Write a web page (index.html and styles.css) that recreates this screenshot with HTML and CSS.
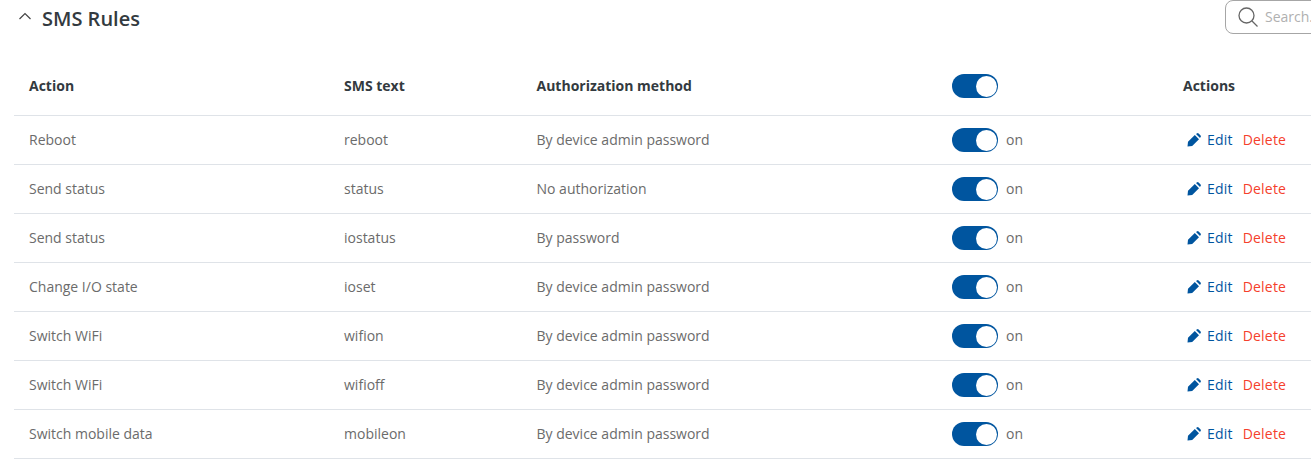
FILE: index.html
```html
<!DOCTYPE html>
<html lang="en">
<head>
    <meta charset="UTF-8">
    <meta name="viewport" content="width=device-width, initial-scale=1.0">
    <title>SMS Rules</title>
    <link rel="stylesheet" href="styles.css">
</head>
<body>
    <div class="top">
        <div class="title">
            <svg class="chevron" width="14" height="8" viewBox="0 0 14 8"><path d="M1.5 7 L7 1.5 L12.5 7" fill="none" stroke="#444" stroke-width="1.2"/></svg>
            <h2>SMS Rules</h2>
        </div>
        <div class="search">
            <svg width="22" height="22" viewBox="0 0 22 22"><circle cx="9.5" cy="9.5" r="7.5" fill="none" stroke="#666" stroke-width="1.3"/><path d="M15 15 L20.5 20.5" stroke="#666" stroke-width="1.3"/></svg>
            <span>Search...</span>
        </div>
    </div>
    <table>
        <thead>
            <tr>
                <th class="col-action">Action</th>
                <th class="col-text">SMS text</th>
                <th class="col-auth">Authorization method</th>
                <th class="col-toggle"><span class="switch"><i></i></span></th>
                <th class="col-actions">Actions</th>
            </tr>
        </thead>
        <tbody>
            <tr>
                <td>Reboot</td><td>reboot</td><td>By device admin password</td>
                <td><div class="state"><span class="switch"><i></i></span>on</div></td>
                <td><div class="links"><a class="edit" href="#"><svg width="14" height="14" viewBox="0 0 14 14"><path d="M.5 13.5 L1 8.8 L7.8 2 L12 6.2 L5.2 13 Z M9 1 L9.8 .4 Q10.8 -.2 11.6 .4 L13.6 2.4 Q14.2 3.2 13.6 4 L13 5 Z" fill="#00559f"/></svg>Edit</a><a class="delete" href="#">Delete</a></div></td>
            </tr>
            <tr>
                <td>Send status</td><td>status</td><td>No authorization</td>
                <td><div class="state"><span class="switch"><i></i></span>on</div></td>
                <td><div class="links"><a class="edit" href="#"><svg width="14" height="14" viewBox="0 0 14 14"><path d="M.5 13.5 L1 8.8 L7.8 2 L12 6.2 L5.2 13 Z M9 1 L9.8 .4 Q10.8 -.2 11.6 .4 L13.6 2.4 Q14.2 3.2 13.6 4 L13 5 Z" fill="#00559f"/></svg>Edit</a><a class="delete" href="#">Delete</a></div></td>
            </tr>
            <tr>
                <td>Send status</td><td>iostatus</td><td>By password</td>
                <td><div class="state"><span class="switch"><i></i></span>on</div></td>
                <td><div class="links"><a class="edit" href="#"><svg width="14" height="14" viewBox="0 0 14 14"><path d="M.5 13.5 L1 8.8 L7.8 2 L12 6.2 L5.2 13 Z M9 1 L9.8 .4 Q10.8 -.2 11.6 .4 L13.6 2.4 Q14.2 3.2 13.6 4 L13 5 Z" fill="#00559f"/></svg>Edit</a><a class="delete" href="#">Delete</a></div></td>
            </tr>
            <tr>
                <td>Change I/O state</td><td>ioset</td><td>By device admin password</td>
                <td><div class="state"><span class="switch"><i></i></span>on</div></td>
                <td><div class="links"><a class="edit" href="#"><svg width="14" height="14" viewBox="0 0 14 14"><path d="M.5 13.5 L1 8.8 L7.8 2 L12 6.2 L5.2 13 Z M9 1 L9.8 .4 Q10.8 -.2 11.6 .4 L13.6 2.4 Q14.2 3.2 13.6 4 L13 5 Z" fill="#00559f"/></svg>Edit</a><a class="delete" href="#">Delete</a></div></td>
            </tr>
            <tr>
                <td>Switch WiFi</td><td>wifion</td><td>By device admin password</td>
                <td><div class="state"><span class="switch"><i></i></span>on</div></td>
                <td><div class="links"><a class="edit" href="#"><svg width="14" height="14" viewBox="0 0 14 14"><path d="M.5 13.5 L1 8.8 L7.8 2 L12 6.2 L5.2 13 Z M9 1 L9.8 .4 Q10.8 -.2 11.6 .4 L13.6 2.4 Q14.2 3.2 13.6 4 L13 5 Z" fill="#00559f"/></svg>Edit</a><a class="delete" href="#">Delete</a></div></td>
            </tr>
            <tr>
                <td>Switch WiFi</td><td>wifioff</td><td>By device admin password</td>
                <td><div class="state"><span class="switch"><i></i></span>on</div></td>
                <td><div class="links"><a class="edit" href="#"><svg width="14" height="14" viewBox="0 0 14 14"><path d="M.5 13.5 L1 8.8 L7.8 2 L12 6.2 L5.2 13 Z M9 1 L9.8 .4 Q10.8 -.2 11.6 .4 L13.6 2.4 Q14.2 3.2 13.6 4 L13 5 Z" fill="#00559f"/></svg>Edit</a><a class="delete" href="#">Delete</a></div></td>
            </tr>
            <tr>
                <td>Switch mobile data</td><td>mobileon</td><td>By device admin password</td>
                <td><div class="state"><span class="switch"><i></i></span>on</div></td>
                <td><div class="links"><a class="edit" href="#"><svg width="14" height="14" viewBox="0 0 14 14"><path d="M.5 13.5 L1 8.8 L7.8 2 L12 6.2 L5.2 13 Z M9 1 L9.8 .4 Q10.8 -.2 11.6 .4 L13.6 2.4 Q14.2 3.2 13.6 4 L13 5 Z" fill="#00559f"/></svg>Edit</a><a class="delete" href="#">Delete</a></div></td>
            </tr>
        </tbody>
    </table>
</body>
</html>
```

FILE: styles.css
```css
html, body {
    overflow: hidden;
}
body {
    font-family: "Open Sans", sans-serif;
    font-size: 14px;
    color: #6b6b6b;
    background-color: #ffffff;
    margin: 0;
    width: 1311px;
    height: 467px;
}
.top {
    display: flex;
    justify-content: space-between;
    height: 57px;
    padding-left: 18px;
}
.title {
    display: flex;
    align-items: flex-start;
    gap: 10px;
}
.chevron {
    margin-top: 12px;
}
h2 {
    margin: 0;
    font-size: 20px;
    font-weight: 600;
    line-height: 38px;
    color: #333a40;
}
.search {
    flex: none;
    box-sizing: border-box;
    display: flex;
    align-items: center;
    gap: 6px;
    width: 120px;
    height: 34px;
    margin-right: -34px;
    padding-left: 11px;
    border: 1px solid #a6a6a6;
    border-radius: 8px;
    color: #b0b0b0;
}
.search span {
    margin-top: -2px;
}
table {
    border-collapse: collapse;
    table-layout: fixed;
    width: 1297px;
    margin-left: 14px;
}
th {
    height: 56px;
    padding: 0 0 2px 15px;
    text-align: left;
    font-weight: 700;
    color: #333a40;
    border-bottom: 1px solid #dfe3e8;
}
td {
    height: 46px;
    padding: 0 0 2px 15px;
    border-bottom: 1px solid #dfe3e8;
}
.col-action { width: 300px; }
.col-text { width: 177.5px; }
.col-auth { width: 400.5px; }
.col-toggle { width: 216px; }
.switch {
    display: inline-flex;
    align-items: center;
    justify-content: flex-end;
    box-sizing: border-box;
    width: 46px;
    height: 24px;
    margin-top: 2px;
    padding-right: 1px;
    border-radius: 12px;
    background-color: #00559f;
    vertical-align: middle;
}
.switch i {
    width: 21px;
    height: 21px;
    border-radius: 50%;
    background-color: #ffffff;
}
.state {
    display: flex;
    align-items: center;
    gap: 8px;
}
.links {
    display: flex;
    align-items: center;
    gap: 10px;
    padding-left: 4px;
    font-weight: 500;
    letter-spacing: 0.2px;
}
.links a {
    text-decoration: none;
}
.edit {
    display: flex;
    align-items: center;
    gap: 6px;
    color: #00559f;
}
.edit svg {
    margin-top: 2px;
}
.delete {
    color: #f5402c;
}
```
